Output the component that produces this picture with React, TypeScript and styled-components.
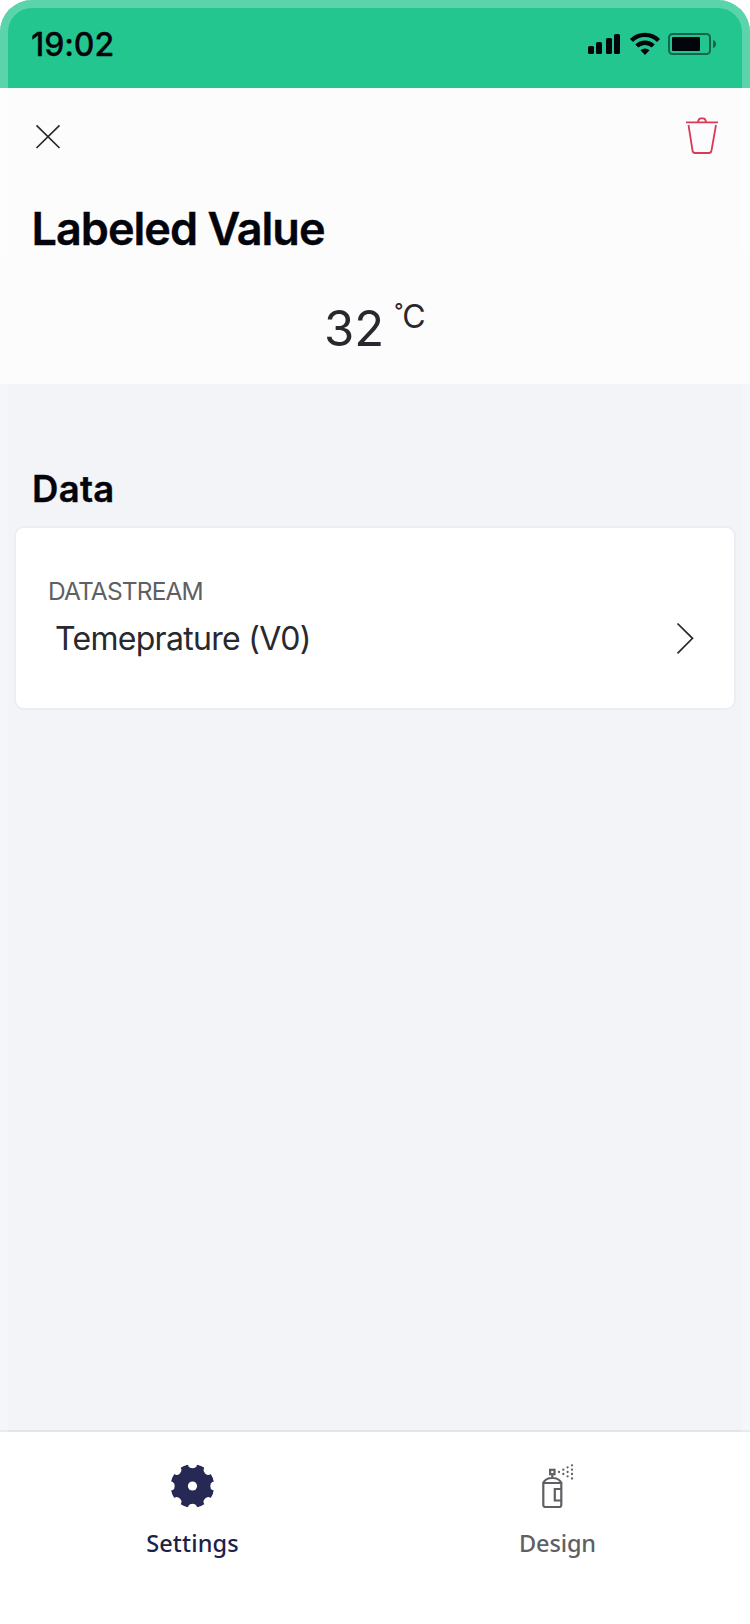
import React from "react";
import styled, { createGlobalStyle } from "styled-components";

const GlobalStyle = createGlobalStyle`
  * { box-sizing: border-box; }
  body { margin: 0; background: #fff; font-family: Inter, "Liberation Sans", sans-serif; }
  svg { display: block; }
`;

const Screen = styled.main`
  position: relative;
  display: flex;
  flex-direction: column;
  width: 750px;
  height: 1624px;
  overflow: hidden;
  border-radius: 32px 32px 0 0;
  background: #f2f4f8;
`;

const Bezel = styled.div`
  position: absolute;
  inset: 0;
  border: 8px solid rgba(255, 255, 255, 0.25);
  border-bottom: 0;
  border-radius: 32px 32px 0 0;
  pointer-events: none;
`;

const StatusBar = styled.header`
  display: flex;
  justify-content: space-between;
  align-items: flex-start;
  height: 88px;
  padding: 24px 33px 0 31px;
  background: #24c690;
  color: #04040c;
`;

const Clock = styled.time`
  padding-top: 1px;
  font-size: 32px;
  line-height: 40px;
  font-weight: 500;
  letter-spacing: -0.1px;
  -webkit-text-stroke: 0.3px currentColor;
`;

const StatusIcons = styled.div`
  padding-top: 8px;
`;

const Preview = styled.section`
  display: flex;
  flex-direction: column;
  height: 296px;
  background: #fcfcfc;
`;

const Actions = styled.div`
  display: flex;
  justify-content: space-between;
  align-items: flex-start;
  padding: 28px 31px 0 34px;
  height: 113px;
`;

const IconButton = styled.button<{ $top?: number }>`
  border: 0;
  padding: 0;
  background: none;
  margin-top: ${(p) => p.$top ?? 0}px;
`;

const Title = styled.h1`
  margin: 0;
  padding-left: 31.5px;
  font-size: 45px;
  line-height: 56px;
  font-weight: 600;
  letter-spacing: -0.98px;
  color: #04040c;
  -webkit-text-stroke: 0.4px currentColor;
`;

const Reading = styled.div`
  display: flex;
  align-items: flex-start;
  padding: 42px 0 0 324px;
  color: #28282f;
`;

const ReadingValue = styled.span`
  font-size: 49px;
  line-height: 60px;
`;

const ReadingUnit = styled.span`
  display: flex;
  margin: -2px 0 0 10px;
  font-size: 32px;
  line-height: 40px;
  font-weight: 400;
`;

const DegreeSign = styled.span`
  margin-right: -1px;
  font-size: 20px;
  line-height: 29px;
  font-weight: 500;
`;

const Content = styled.section`
  flex: 1;
  padding: 83px 14px 0 14px;
`;

const SectionTitle = styled.h2`
  margin: 0 0 15px;
  padding-left: 18px;
  font-size: 36.5px;
  line-height: 44px;
  font-weight: 600;
  letter-spacing: 0.3px;
  color: #04040c;
  -webkit-text-stroke: 0.4px currentColor;
`;

const Card = styled.div`
  display: flex;
  justify-content: space-between;
  height: 184px;
  padding: 47px 40px 0 31px;
  border: 2px solid #edeef4;
  border-radius: 10px;
  background: #fff;
`;

const Field = styled.div`
  display: flex;
  flex-direction: column;
`;

const FieldLabel = styled.span`
  padding-left: 1px;
  font-size: 24.5px;
  line-height: 32px;
  font-weight: 400;
  letter-spacing: -0.85px;
  color: #5f5f64;
`;

const FieldValue = styled.span`
  margin-top: 12px;
  padding-left: 8px;
  font-size: 32px;
  line-height: 40px;
  font-weight: 400;
  letter-spacing: -0.7px;
  color: #28282f;
`;

const Chevron = styled.svg`
  margin-top: 47px;
`;

const TabBar = styled.nav`
  display: flex;
  height: 194px;
  padding: 32px 10px 0;
  border-top: 2px solid #e4e5eb;
  background: #fff;
`;

const Tab = styled.button<{ $active?: boolean }>`
  display: flex;
  flex: 1;
  flex-direction: column;
  align-items: center;
  padding: 0;
  border: 0;
  background: none;
  font-family: "Noto Sans", sans-serif;
  font-size: 23.5px;
  line-height: 32px;
  font-weight: 500;
  color: ${(p) => (p.$active ? "#1e2147" : "#5f5f64")};
`;

const TabLabel = styled.span<{ $spacing: number }>`
  margin-top: 19px;
  letter-spacing: ${(p) => p.$spacing}px;
`;

const notches = [0, 45, 90, 135, 180, 225, 270, 315];
const dots = [
  [558.7, 1472], [563, 1469.7], [563, 1474], [567.3, 1467.3], [567.3, 1472],
  [567.3, 1476.3], [571.7, 1465.3], [571.7, 1469.7], [571.7, 1474], [571.7, 1478.5],
];

const StatusGlyphs = () => (
  <svg width="130" height="24" viewBox="587 32 130 24" fill="#04040c">
    <rect x="588" y="46" width="6" height="8" rx="1.6" />
    <rect x="596" y="42" width="6" height="12" rx="1.6" />
    <rect x="606" y="38" width="6" height="16" rx="1.6" />
    <rect x="614" y="34" width="6" height="20" rx="1.6" />
    <g fill="none" stroke="#04040c" strokeWidth="4.4">
      <path d="M631.5 40.5A19 19 0 0 1 658.5 40.5" />
      <path d="M636.8 46A12 12 0 0 1 653.2 46" />
    </g>
    <path d="M640.5 50.3Q645 46.6 649.5 50.3L645 55Z" />
    <rect x="669" y="34" width="41" height="20" rx="3.5" fill="none" stroke="#04040c" strokeOpacity=".5" strokeWidth="2" />
    <rect x="672" y="37" width="28" height="14" rx="1" />
    <path d="M713 40Q716 41 716 44T713 48Z" fillOpacity=".5" />
  </svg>
);

const Gear = () => (
  <svg width="44" height="44" viewBox="-21.5 -22 44 44">
    <mask id="teeth" maskUnits="userSpaceOnUse" x="-22" y="-22" width="44" height="44">
      <circle r="22" fill="#fff" />
      <circle r="4.6" fill="#000" />
      {notches.map((a) => (
        <path key={a} d="M-5.2 -23L-4 -19.8Q-3 -17.8 0 -17.8T4 -19.8L5.2 -23Z" transform={`rotate(${a})`} fill="#000" />
      ))}
    </mask>
    <circle r="21.9" fill="#272955" mask="url(#teeth)" />
  </svg>
);

const Spray = () => (
  <svg width="44" height="44" viewBox="535.7 1464 44 44" fill="none" stroke="#5f5f64" strokeWidth="2.2">
    <rect x="549.8" y="1469.8" width="4.4" height="4.4" />
    <path d="M552 1474V1478M543 1483Q545 1478 552 1478T561 1483M543 1483H561V1505Q561 1507 559 1507H545Q543 1507 543 1505ZM561 1489H554.5V1500.5H561" />
    {dots.map(([x, y]) => (
      <circle key={`${x}-${y}`} cx={x} cy={y} r="1.15" fill="#5f5f64" stroke="none" />
    ))}
  </svg>
);

export default function App() {
  return (
    <>
      <GlobalStyle />
      <Screen>
        <StatusBar>
          <Clock>19:02</Clock>
          <StatusIcons><StatusGlyphs /></StatusIcons>
        </StatusBar>
        <Preview>
          <Actions>
            <IconButton $top={7} aria-label="Close">
              <svg width="28" height="28" viewBox="34 123 28 28" stroke="#28282f" strokeWidth="1.7">
                <path d="M36.5 125.3L59.5 148M59.5 125.3L36.5 148" />
              </svg>
            </IconButton>
            <IconButton aria-label="Delete">
              <svg width="34" height="40" viewBox="685 116 34 40" fill="none" stroke="#d83a57" strokeWidth="1.8">
                <path d="M686 122.3H718M698 122Q698.5 118.3 701 118.3H703Q705.5 118.3 706 122M688.5 125L692.5 150.5Q693 153 695 153H709Q711 153 711.5 150.5L716 125" />
              </svg>
            </IconButton>
          </Actions>
          <Title>Labeled Value</Title>
          <Reading>
            <ReadingValue>32</ReadingValue>
            <ReadingUnit><DegreeSign>°</DegreeSign>C</ReadingUnit>
          </Reading>
        </Preview>
        <Content>
          <SectionTitle>Data</SectionTitle>
          <Card>
            <Field>
              <FieldLabel>DATASTREAM</FieldLabel>
              <FieldValue>Temeprature (V0)</FieldValue>
            </Field>
            <Chevron width="18" height="32" viewBox="676 622 18 32" fill="none" stroke="#28282f" strokeWidth="1.7">
              <path d="M677.5 623.5L692.5 638.3L677.5 653.3" />
            </Chevron>
          </Card>
        </Content>
        <TabBar>
          <Tab $active>
            <Gear />
            <TabLabel $spacing={0.15}>Settings</TabLabel>
          </Tab>
          <Tab>
            <Spray />
            <TabLabel $spacing={-0.15}>Design</TabLabel>
          </Tab>
        </TabBar>
        <Bezel />
      </Screen>
    </>
  );
}
